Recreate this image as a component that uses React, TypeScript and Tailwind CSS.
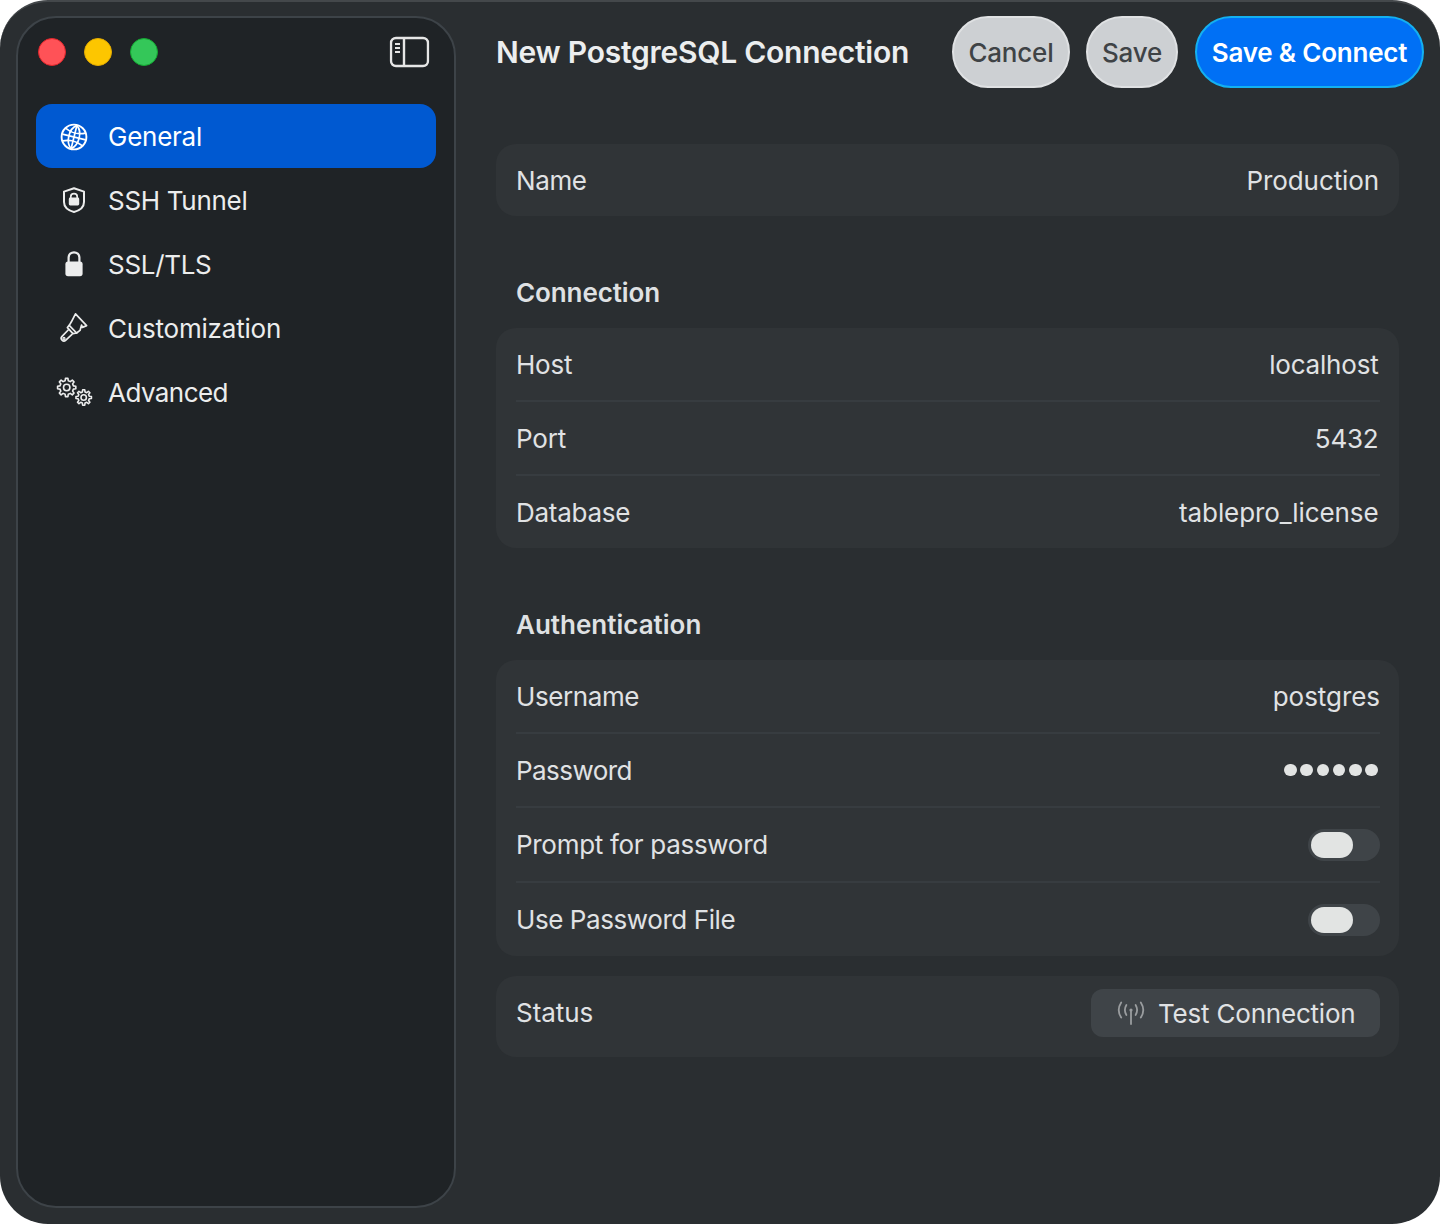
import React from "react";

const gearPath = (outer: number, inner: number, teeth: number) => {
  const pts: string[] = [];
  for (let i = 0; i < teeth; i++) {
    const a = (i * 2 * Math.PI) / teeth;
    const step = (2 * Math.PI) / teeth;
    const list: [number, number][] = [
      [inner, a - step * 0.3],
      [outer, a - step * 0.17],
      [outer, a + step * 0.17],
      [inner, a + step * 0.3],
    ];
    list.forEach(([r, t]) => pts.push(`${(r * Math.sin(t)).toFixed(2)} ${(-r * Math.cos(t)).toFixed(2)}`));
  }
  return `M${pts.join(" L")} Z`;
};

const Gear = ({ x, y, outer, inner, hole }: { x: number; y: number; outer: number; inner: number; hole: number }) => (
  <g transform={`translate(${x} ${y})`} fill="none" stroke="currentColor" strokeWidth="1.6" strokeLinejoin="round">
    <path d={gearPath(outer, inner, 8)} />
    <circle r={hole} />
  </g>
);

const icons: Record<string, React.ReactNode> = {
  globe: (
    <svg width="28" height="28" viewBox="0 0 28 28" fill="none" stroke="currentColor" strokeWidth="1.7" className="translate-y-[1px]">
      <circle cx="14" cy="14" r="12.4" strokeWidth="1.9" />
      <g transform="rotate(14 14 14)">
        <path d="M14 2 C7 7 7 21 14 26" />
        <path d="M14 2 C21 7 21 21 14 26" />
        <path d="M14 2 V26" />
        <path d="M4 7.5 C10 10.5 18 10.5 24 7.5" />
        <path d="M4 20.5 C10 17.5 18 17.5 24 20.5" />
        <path d="M2 14 H26" />
      </g>
    </svg>
  ),
  shield: (
    <svg width="24" height="28" viewBox="0 0 24 28" fill="none">
      <path d="M12 2.2 L22 5.6 V16 C22 21 17.5 24.5 12 26 C6.5 24.5 2 21 2 16 V5.6 Z" stroke="currentColor" strokeWidth="2" strokeLinejoin="round" />
      <path d="M8.8 12 V10.4 C8.8 6.6 15.2 6.6 15.2 10.4 V12" stroke="currentColor" strokeWidth="1.7" />
      <rect x="6.8" y="11.6" width="10.4" height="7.8" rx="1.4" fill="currentColor" />
    </svg>
  ),
  lock: (
    <svg width="20" height="28" viewBox="0 0 20 28" fill="none">
      <path d="M4.6 13 V7.6 C4.6 0.6 15.4 0.6 15.4 7.6 V13" stroke="currentColor" strokeWidth="2.2" />
      <rect x="1.4" y="11.6" width="17.2" height="14.6" rx="2.6" fill="currentColor" />
    </svg>
  ),
  brush: (
    <svg width="30" height="32" viewBox="0 0 30 32" fill="none" stroke="currentColor" strokeWidth="1.7" strokeLinejoin="round" strokeLinecap="round">
      <path d="M16.5 1.8 L27.6 13.6 L23.4 15.4 L22.6 13 L21 18.4 L17.6 21 L10.2 13.4 L12.4 9.8 Z" />
      <path d="M10.2 13.4 L8.4 15.6 L14 21.6 L17.6 21" />
      <path d="M9.2 18 L2.8 24.6 C0.8 26.8 4.2 30.6 6.6 28.4 L13 22.4" />
      <circle cx="5" cy="26.4" r="1" strokeWidth="1.2" />
    </svg>
  ),
  gears: (
    <svg width="38" height="32" viewBox="0 0 38 32" className="-mr-[2px]">
      <Gear x={10.7} y={11.5} outer={9.2} inner={6.9} hole={3.2} />
      <Gear x={27.7} y={21.5} outer={7.8} inner={5.7} hole={2.7} />
    </svg>
  ),
};

const nav = [
  { label: "General", icon: "globe", active: true, track: "tracking-[-0.25px]" },
  { label: "SSH Tunnel", icon: "shield", track: "tracking-[-0.3px]" },
  { label: "SSL/TLS", icon: "lock", track: "tracking-[-0.3px]" },
  { label: "Customization", icon: "brush", track: "tracking-[-0.2px]" },
  { label: "Advanced", icon: "gears", track: "tracking-[-0.55px]" },
];

const Row = ({ label, children, h = "h-[74px]", border = true, track = "" }: { label: string; children?: React.ReactNode; h?: string; border?: boolean; track?: string }) => (
  <div className={`flex items-center justify-between ${h} ${border ? "border-b-2 border-[#373c40]" : ""}`}>
    <span className={track}>{label}</span>
    {children}
  </div>
);

const Toggle = () => (
  <div className="flex items-center w-[72px] h-[32px] rounded-full bg-[#3f4448] pl-[3px]">
    <div className="w-[42px] h-[26px] rounded-full bg-[#e2e4e3]" />
  </div>
);

const Card = ({ children, className = "" }: { children: React.ReactNode; className?: string }) => (
  <div className={`rounded-[20px] bg-[#303437] pl-5 pr-[19px] ${className}`}>{children}</div>
);

export default function App() {
  return (
    <div className="w-[1440px] h-[1224px] bg-white" style={{ fontFamily: "Inter, sans-serif" }}>
      <div className="w-full h-full rounded-[48px] bg-[#2a2e31] border-t-2 border-[#44484b] flex text-[26px] tracking-[-0.2px] text-[#e0e2e4] overflow-hidden">
        <aside className="w-[440px] h-[1192px] ml-4 mt-[14px] rounded-[40px] border-2 border-[#3d4348] bg-[#1f2326] flex flex-col shrink-0">
          <div className="flex items-center justify-between h-[68px] pl-5 pr-[25px]">
            <div className="flex gap-[18px]">
              <div className="w-[28px] h-[28px] rounded-full bg-[#ff5257] border border-[#e0262c]" />
              <div className="w-[28px] h-[28px] rounded-full bg-[#fdc600] border border-[#e3ab00]" />
              <div className="w-[28px] h-[28px] rounded-full bg-[#34c759] border border-[#14a832]" />
            </div>
            <svg width="40" height="32" viewBox="0 0 40 32" fill="none" className="text-[#e6e6e6] translate-x-[0.5px]">
              <rect x="1.5" y="2" width="37" height="28" rx="5" stroke="currentColor" strokeWidth="2.4" />
              <path d="M14.5 2 V30" stroke="currentColor" strokeWidth="2.4" />
              <path d="M5.5 8 H10.5 M5.5 12 H10.5 M5.5 16 H10.5" stroke="currentColor" strokeWidth="1.8" />
            </svg>
          </div>
          <nav className="flex flex-col mt-[18px] px-[18px]">
            {nav.map((n) => (
              <div
                key={n.label}
                className={`flex items-center h-[64px] rounded-[16px] ${n.active ? "bg-[#0059d1] text-white" : "text-[#eceded]"}`}
              >
                <div className="w-[72px] flex justify-center pl-[4px]">{icons[n.icon]}</div>
                <span className={n.track}>{n.label}</span>
              </div>
            ))}
          </nav>
        </aside>

        <main className="flex-1 flex flex-col min-w-0 pl-[40px]">
          <header className="flex items-center h-[72px] mt-[14px] pr-4">
            <h1 className="text-[30px] tracking-[-0.25px] font-semibold text-[#eceeef]">New PostgreSQL Connection</h1>
            <div className="ml-auto flex items-center font-medium tracking-[-0.2px]">
              <button className="w-[118px] h-[72px] rounded-full bg-[#cdd0d3] border-2 border-[#dfe1e3] text-[#3f4346]">Cancel</button>
              <button className="ml-4 w-[92px] h-[72px] rounded-full bg-[#cdd0d3] border-2 border-[#dfe1e3] text-[#3f4346]">Save</button>
              <button className="ml-[17px] w-[229px] h-[72px] rounded-full bg-[#0070f5] border-2 border-[#14b0f0] text-white font-semibold">Save &amp; Connect</button>
            </div>
          </header>

          <div className="mt-[56px] pr-[41px] flex flex-col">
            <Card className="h-[72px] flex items-center justify-between pr-[20px]">
              <span className="tracking-[-0.4px]">Name</span>
              <span className="tracking-[-0.1px]">Production</span>
            </Card>

            <h2 className="mt-[61px] h-[32px] leading-[32px] pl-5 font-semibold tracking-[-0.1px] text-[#dfe1e3]">Connection</h2>
            <Card className="mt-[19px]">
              <Row label="Host"><span className="mr-[1.5px]">localhost</span></Row>
              <Row label="Port"><span className="mr-[1.5px]">5432</span></Row>
              <Row label="Database" h="h-[72px]" border={false} track="tracking-[-0.25px]"><span className="mr-[1.5px] tracking-[-0.1px]">tablepro_license</span></Row>
            </Card>

            <h2 className="mt-[61px] h-[32px] leading-[32px] pl-5 font-semibold tracking-normal text-[#dfe1e3]">Authentication</h2>
            <Card className="mt-[19px]">
              <Row label="Username" track="tracking-[-0.4px]"><span className="tracking-[-0.05px]">postgres</span></Row>
              <Row label="Password" track="tracking-[-0.55px]">
                <div className="flex gap-[3.7px] mr-[2px]">
                  {[0, 1, 2, 3, 4, 5].map((i) => (
                    <div key={i} className="w-[12.6px] h-[12.6px] rounded-full bg-[#e2e4e3]" />
                  ))}
                </div>
              </Row>
              <Row label="Prompt for password" h="h-[75px]" track="tracking-[-0.3px]"><Toggle /></Row>
              <Row label="Use Password File" h="h-[73px]" border={false} track="tracking-[-0.42px]"><Toggle /></Row>
            </Card>

            <Card className="mt-[20px] h-[81px] pt-[13px] flex items-start justify-between">
              <span className="leading-[48px] tracking-[-0.05px]">Status</span>
              <div className="flex items-center w-[289px] h-[48px] rounded-[12px] bg-[#3f4448] pl-[25px]">
                <svg width="30" height="26" viewBox="0 0 30 26" fill="none" stroke="#9a9d9f" strokeWidth="1.8" strokeLinecap="round">
                  <path d="M15 11 V24" />
                  <circle cx="15" cy="10" r="1.6" fill="#9a9d9f" stroke="none" />
                  <path d="M10.4 5 C8.6 8 8.6 12 10.4 15" />
                  <path d="M19.6 5 C21.4 8 21.4 12 19.6 15" />
                  <path d="M5.2 2.4 C2.2 7 2.2 13 5.2 17.6" />
                  <path d="M24.8 2.4 C27.8 7 27.8 13 24.8 17.6" />
                </svg>
                <span className="ml-[12px]">Test Connection</span>
              </div>
            </Card>
          </div>
        </main>
      </div>
    </div>
  );
}
